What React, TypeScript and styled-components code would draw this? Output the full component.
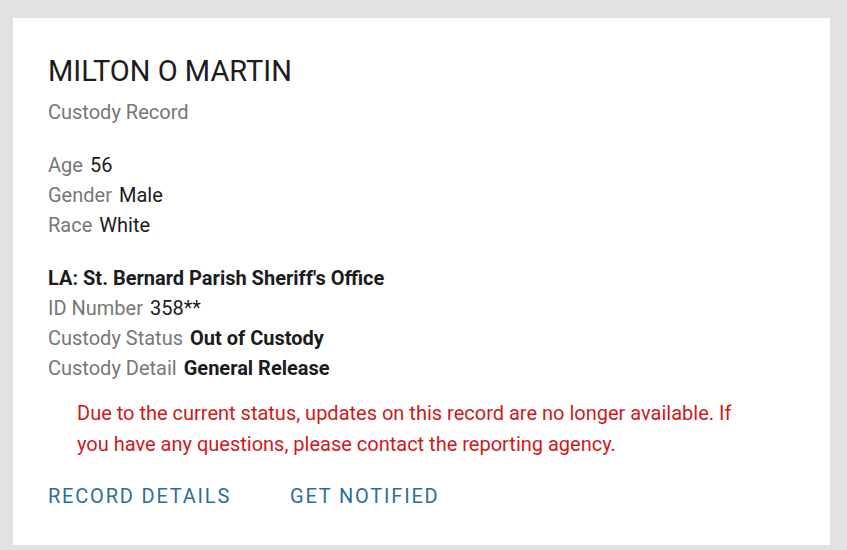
import React from 'react'
import styled, { createGlobalStyle } from 'styled-components'

const GlobalStyle = createGlobalStyle`
    html, body {
        margin: 0;
        padding: 0;
        background: #e2e2e2;
        font-family: Roboto, "Noto Sans", sans-serif;
    }
`

const Page = styled.div`
    padding: 18px 17px 5px 13px;
`

const Card = styled.div`
    background: #ffffff;
    padding: 36px 35px 37px 35px;
    display: flex;
    flex-direction: column;
`

const Name = styled.h1`
    margin: 0;
    font-size: 29px;
    font-weight: 400;
    line-height: 34px;
    color: #1c1c1c;
`

const Subtitle = styled.div`
    margin-top: 12px;
    font-size: 20px;
    line-height: 24px;
    color: #777777;
`

const Group = styled.div<{ $top: number }>`
    margin-top: ${(p) => p.$top}px;
    display: flex;
    flex-direction: column;
`

const Row = styled.div`
    font-size: 20px;
    line-height: 30px;
    display: flex;
    gap: 7px;
`

const Label = styled.span`
    color: #777777;
`

const Value = styled.span<{ $bold?: boolean }>`
    color: #1c1c1c;
    font-weight: ${(p) => (p.$bold ? 700 : 400)};
`

const Agency = styled.div`
    font-size: 20px;
    line-height: 30px;
    font-weight: 700;
    color: #1c1c1c;
`

const Notice = styled.p`
    margin: 15px 0 0 29px;
    max-width: 672px;
    font-size: 20px;
    line-height: 30.5px;
    color: #d0191a;
`

const Actions = styled.div`
    margin-top: 25px;
    display: flex;
    gap: 59px;
`

const ActionLink = styled.a`
    font-size: 20px;
    line-height: 24px;
    letter-spacing: 1.8px;
    color: #2a6f9b;
    text-decoration: none;
    cursor: pointer;
`

const details = [
    { label: 'Age', value: '56' },
    { label: 'Gender', value: 'Male' },
    { label: 'Race', value: 'White' },
]

const custody = [
    { label: 'ID Number', value: '358**', bold: false },
    { label: 'Custody Status', value: 'Out of Custody', bold: true },
    { label: 'Custody Detail', value: 'General Release', bold: true },
]

const App: React.FC = () => {
    return (
        <>
            <GlobalStyle />
            <Page>
                <Card>
                    <Name>MILTON O MARTIN</Name>
                    <Subtitle>Custody Record</Subtitle>
                    <Group $top={26}>
                        {details.map((d) => (
                            <Row key={d.label}>
                                <Label>{d.label}</Label>
                                <Value>{d.value}</Value>
                            </Row>
                        ))}
                    </Group>
                    <Group $top={23}>
                        <Agency>LA: St. Bernard Parish Sheriff's Office</Agency>
                        {custody.map((d) => (
                            <Row key={d.label}>
                                <Label>{d.label}</Label>
                                <Value $bold={d.bold}>{d.value}</Value>
                            </Row>
                        ))}
                    </Group>
                    <Notice>
                        Due to the current status, updates on this record are no longer
                        available. If you have any questions, please contact the reporting
                        agency.
                    </Notice>
                    <Actions>
                        <ActionLink>RECORD DETAILS</ActionLink>
                        <ActionLink>GET NOTIFIED</ActionLink>
                    </Actions>
                </Card>
            </Page>
        </>
    )
}

export default App
